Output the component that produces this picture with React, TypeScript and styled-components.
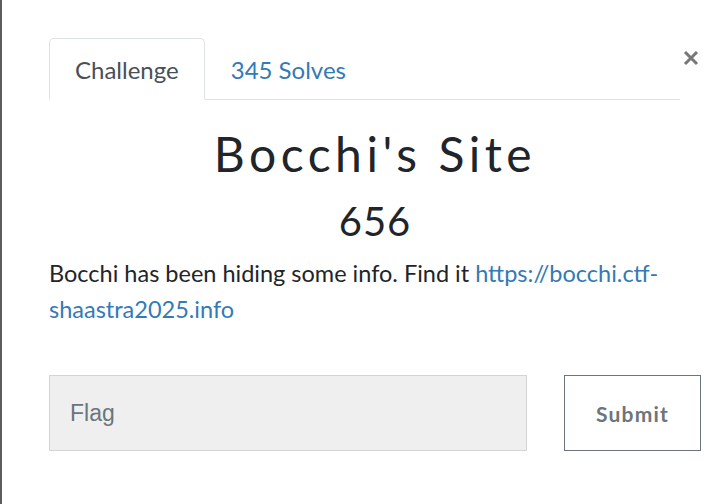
import React from "react";
import styled, { createGlobalStyle } from "styled-components";

const Global = createGlobalStyle`
  html, body { margin: 0; padding: 0; background: #fff; }
  body { font-family: Lato, "Open Sans", sans-serif; color: #212529; }
  * { box-sizing: border-box; }
`;

const Page = styled.div`
  position: relative;
  width: 727px;
  height: 504px;
  overflow: hidden;
  background: #fff;
  border-left: 2px solid #5d5d5d;
  &::before {
    content: "";
    position: absolute;
    left: -2px;
    top: 0;
    width: 2px;
    height: 31px;
    background: #5a0f4e;
  }
`;

const Content = styled.div`
  width: 652px;
  margin-left: 47px;
  padding-top: 38px;
`;

const Header = styled.div`
  display: flex;
  align-items: flex-start;
`;

const Nav = styled.ul`
  flex: 1;
  display: flex;
  margin: 0;
  padding: 0;
  list-style: none;
  border-bottom: 1px solid #dee2e6;
`;

const Tab = styled.li<{ $active?: boolean }>`
  height: 62px;
  margin-bottom: -1px;
  padding: 0 25px;
  display: flex;
  align-items: center;
  font-size: 24px;
  border: 1px solid ${(p) => (p.$active ? "#dee2e6" : "transparent")};
  border-bottom-color: ${(p) => (p.$active ? "#fff" : "transparent")};
  border-radius: 5px 5px 0 0;
  background: ${(p) => (p.$active ? "#fff" : "transparent")};
  color: ${(p) => (p.$active ? "#495057" : "#337ab7")};
`;

const Close = styled.button`
  width: 21px;
  height: 21px;
  margin-top: 9px;
  padding: 0;
  border: 0;
  background: transparent;
  display: flex;
  align-items: center;
  justify-content: center;
`;

const Title = styled.h3`
  margin: 24px 0 0;
  text-align: center;
  font-family: Lato, sans-serif;
  font-weight: 400;
  font-size: 48px;
  letter-spacing: 4.5px;
  line-height: 60px;
  color: #212529;
`;

const Value = styled.h4`
  margin: 9px 0 0;
  text-align: center;
  font-family: Lato, sans-serif;
  font-weight: 400;
  font-size: 40px;
  letter-spacing: 1px;
  line-height: 56px;
  color: #212529;
`;

const Desc = styled.p`
  margin: 6px 0 0;
  font-size: 23.5px;
  line-height: 36px;
  color: #212529;
  a { color: #337ab7; text-decoration: none; }
`;

const Form = styled.form`
  display: flex;
  justify-content: space-between;
  margin-top: 48px;
`;

const Input = styled.input`
  width: 478px;
  height: 76px;
  padding: 0 20px;
  background: #efefef;
  border: 1px solid #d4d4d4;
  font-family: "Liberation Sans", Arial, sans-serif;
  font-size: 23px;
  color: #6c757d;
  &::placeholder { color: #6c757d; }
`;

const Submit = styled.button`
  width: 137px;
  height: 76px;
  background: #fff;
  border: 1px solid #6c757d;
  font-family: Lato, sans-serif;
  font-weight: 700;
  font-size: 21px;
  letter-spacing: 1.2px;
  color: #6c757d;
`;

export default function App() {
  return (
    <>
      <Global />
      <Page>
        <Content>
          <Header>
            <Nav>
              <Tab $active>Challenge</Tab>
              <Tab>345 Solves</Tab>
            </Nav>
            <Close aria-label="Close">
              <svg width="16" height="16" viewBox="0 0 16 16">
                <path d="M2 2L14 14M14 2L2 14" stroke="#777" strokeWidth="3" />
              </svg>
            </Close>
          </Header>
          <Title>Bocchi's Site</Title>
          <Value>656</Value>
          <Desc>
            Bocchi has been hiding some info. Find it{" "}
            <a href="#">https://bocchi.ctf-shaastra2025.info</a>
          </Desc>
          <Form onSubmit={(e) => e.preventDefault()}>
            <Input placeholder="Flag" />
            <Submit type="submit">Submit</Submit>
          </Form>
        </Content>
      </Page>
    </>
  );
}
